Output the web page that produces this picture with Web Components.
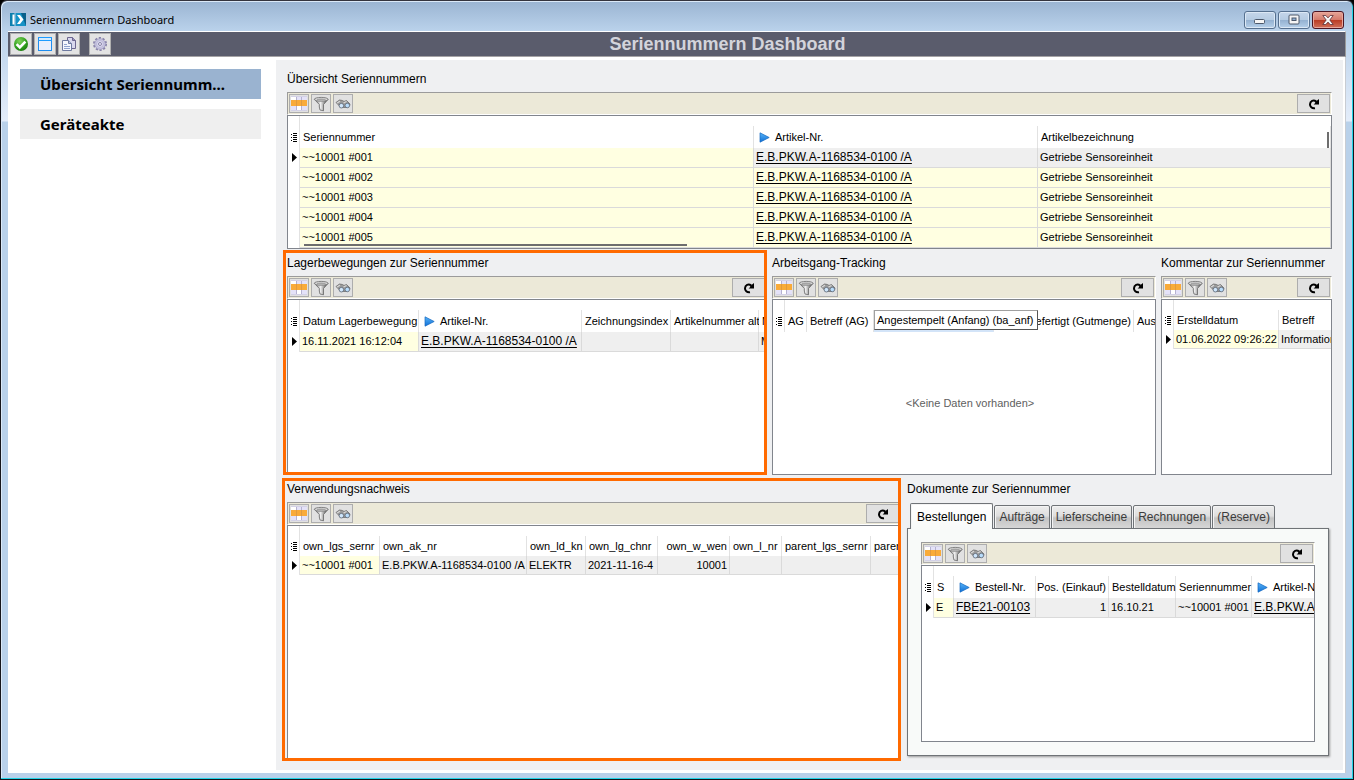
<!DOCTYPE html>
<html lang="de">
<head>
<meta charset="utf-8">
<title>Seriennummern Dashboard</title>
<style>
  html, body { margin: 0; height: 100%; background: #000; }
  body { font: 11px/14px "Liberation Sans", Arial, sans-serif; color: #000; overflow: hidden; }
</style>
</head>
<body>
<app-window>
  <title-bar slot="title">Seriennummern Dashboard</title-bar>
  <main-toolbar slot="toolbar">Seriennummern Dashboard</main-toolbar>
  <side-nav slot="nav"></side-nav>
  <dash-board></dash-board>
</app-window>

<script>
const define = (name, html, setup) => {
  const tpl = document.createElement('template');
  tpl.innerHTML = html;
  customElements.define(name, class extends HTMLElement {
    connectedCallback() {
      if (this.shadowRoot) return;
      const root = this.attachShadow({ mode: 'open' });
      root.append(tpl.content.cloneNode(true));
      if (setup) setup(this, root);
    }
  });
};

/* ---------- icons ---------- */
const ICONS = {
  ok: `<svg width="16" height="16" viewBox="0 0 16 16"><defs><radialGradient id="g" cx=".4" cy=".3" r=".8"><stop offset="0" stop-color="#7fd35a"/><stop offset=".6" stop-color="#2f9e1c"/><stop offset="1" stop-color="#137008"/></radialGradient></defs><circle cx="8" cy="8" r="7" fill="url(#g)"/><path d="M3.600 8.200 6.800 11.400 12.400 5.600" fill="none" stroke="#fff" stroke-width="2.600"/></svg>`,
  window: `<svg width="16" height="16" viewBox="0 0 16 16"><rect x="1.500" y="1.500" width="13" height="13" fill="#e9eefc" stroke="#1e8df0"/><path d="M2 2h12v2.500H2z" fill="#d4ecff"/><path d="M1 4.500h14M1 1.500h14" stroke="#1e9bff"/></svg>`,
  copy: `<svg width="16" height="16" viewBox="0 0 16 16"><path d="M6.500 1.500h5l3 3v8h-8z" fill="#d9d8ee" stroke="#6d6790"/><path d="M11.500 1.500v3h3" fill="#9b95bd" stroke="#6d6790"/><path d="M1.500 4.500h6l3 3v7h-9z" fill="#f4f6fd" stroke="#6f7aa0"/><path d="M7.500 4.500v3h3" fill="#b8c4e2" stroke="#6f7aa0"/><path d="M3 8.500h3M3 10.500h6M3 12.500h6" stroke="#8fa3cf"/></svg>`,
  gear: `<svg width="16" height="16" viewBox="0 0 16 16"><circle cx="8" cy="8" r="6.100" fill="none" stroke="#8883aa" stroke-width="1.800" stroke-dasharray="2.200 1.630"/><circle cx="8" cy="8" r="5.300" fill="#c9c7e2" stroke="#9a95bd" stroke-width=".7"/><circle cx="8" cy="8" r="3.400" fill="#dddcf0" stroke="#b4b0d2" stroke-width=".8"/><circle cx="8" cy="8" r="1.500" fill="#efeff8" stroke="#8883aa"/></svg>`,
  grid: `<svg width="18" height="17" viewBox="0 0 18 17" shape-rendering="crispEdges"><path fill="#fff" d="M1 1h16v15H1z"/><path fill="#e4e2f8" d="M7 1h4v4H7zM12 1h5v4h-5zM1 11h5v5H1zM12 11h5v5h-5z"/><path fill="#f9ab3a" d="M1 5h16v6H1z"/><path d="M6.500 1v15M11.500 1v15" stroke="#b5b2d0"/><path d="M6.500 5v6M11.500 5v6" stroke="#e09a40"/><path d="M1 1.500h16M1 15.500h16" stroke="#d3d1e6"/></svg>`,
  filter: `<svg width="16" height="16" viewBox="0 0 16 16"><defs><linearGradient id="f"><stop offset="0" stop-color="#6a6a6a"/><stop offset=".45" stop-color="#efefef"/><stop offset=".8" stop-color="#7a7a7a"/><stop offset="1" stop-color="#606060"/></linearGradient></defs><path d="M1.500 3.500 6.300 8.500V11L7 14l3.500.8V8.500L15 3.500z" fill="url(#f)" stroke="#666" stroke-width=".8"/><ellipse cx="8.200" cy="3.300" rx="6.900" ry="1.900" fill="#dcdcdc" stroke="#777" stroke-width=".9"/><ellipse cx="8.200" cy="3.500" rx="4.500" ry=".9" fill="#a4a4a4"/></svg>`,
  find: `<svg width="16" height="16" viewBox="0 0 16 16"><path d="M1 6.500 4.500 4l3 .5L9 5.500l2.500-1L15 8l-.5 2-3 1.500L6 11.500z" fill="#9a9a9a" stroke="#6c6c6c" stroke-width=".8"/><path d="M2 7l3-1.800M8.500 7l3-1.500" stroke="#d8d8d8" stroke-width="1.200"/><circle cx="6.400" cy="9.700" r="2.300" fill="#cfe6fb" stroke="#5f6a78" stroke-width=".8"/><circle cx="12.300" cy="9.500" r="2.300" fill="#b8dcfb" stroke="#5f6a78" stroke-width=".8"/></svg>`,
  reload: `<svg width="12" height="12" viewBox="0 0 12 12"><path d="M7 10.200C3.800 10.700 1.900 8.600 2 6.200 2.100 3.200 5.300 1.300 8.300 3.600" fill="none" stroke="#000" stroke-width="2"/><path d="M11 1v5.600H5.600L7.200 5V4z"/></svg>`,
  arrow: `<svg width="11" height="11" viewBox="0 0 11 11"><defs><linearGradient id="a" x2="0" y2="1"><stop offset="0" stop-color="#58b4f8"/><stop offset="1" stop-color="#0f6fd6"/></linearGradient></defs><path d="M1 .8 10.200 5.500 1 10.200z" fill="url(#a)" stroke="#1668c0" stroke-width=".7"/></svg>`,
  list: `<svg width="7" height="9" viewBox="0 0 7 9" shape-rendering="crispEdges"><path d="M2 .5h4M2 2.500h4M2 4.500h4M2 6.500h4M2 8.500h4M0 1.500h1M0 4.500h1M0 7.500h1" stroke="#000" stroke-width="1"/></svg>`,
  current: `<svg width="6" height="9" viewBox="0 0 6 9"><path d="M1 0 6 4.500 1 9z"/></svg>`,
  logo: `<svg width="16" height="13" viewBox="0 0 16 13"><path fill="#0d7fae" d="M0 0h4.500v13H0z"/><path fill="#1592c6" d="M5.500 0H16v13H5.500z"/><path fill="#0a5f8a" d="M11 0h5v13z"/><path fill="#fff" d="M2.500 1.500h2v10h-2zM7 2l3 0 3.500 4.500L10 11H7l3.200-4.500z"/></svg>`,
  min: `<svg width="12" height="12" viewBox="0 0 12 12"><rect x=".5" y="5.500" width="10" height="4" rx="1" fill="#f5f5f5" stroke="#4c586b"/></svg>`,
  max: `<svg width="12" height="12" viewBox="0 0 12 12"><rect x="1" y="1" width="10" height="9" rx="1" fill="#f5f5f5" stroke="#4c586b"/><rect x="4" y="4" width="4" height="2.500" fill="#8fb0d4" stroke="#4c586b"/></svg>`,
  close: `<svg width="12" height="12" viewBox="0 0 12 12"><path d="M.8 1.500h3l2.200 2.400 2.200-2.400h3L7.800 6l3.400 4.500h-3L6 8.100l-2.200 2.400h-3L4.200 6z" fill="#f6f6f6" stroke="#5a3038" stroke-width=".8"/></svg>`
};
customElements.define('ui-icon', class extends HTMLElement {
  connectedCallback() {
    if (this.shadowRoot) return;
    this.attachShadow({ mode: 'open' }).innerHTML =
      `<style>:host{display:inline-flex;flex:none}svg{display:block}</style>${ICONS[this.getAttribute('name')]}`;
  }
});

/* ---------- window frame ---------- */
define('app-window', `
<style>
  :host { display: flex; flex-direction: column; box-sizing: border-box; height: 100vh;
    border: 1px solid #15151b; border-top-color: #34343e; border-radius: 7px 7px 0 0;
    padding: 0 7px 5px 7px; box-shadow: inset -1px -1px 0 #22d3e6, inset 1px 1px 0 #dbe9f8;
    background: linear-gradient(#9ab4d2 0, #bad2eb 30px, #e4edfa 120px, #b9d1ea 121px); }
  .body { flex: 1; display: flex; min-height: 0; background: #fff; padding: 3px 2px 3px 0; border-right: 1px solid #c8ccd2; margin-bottom: 1px; }
  ::slotted(side-nav) { flex: none; }
  ::slotted(dash-board) { flex: 1; min-width: 0; }
</style>
<slot name="title"></slot>
<slot name="toolbar"></slot>
<div class="body"><slot name="nav"></slot><slot></slot></div>`);

define('title-bar', `
<style>
  :host { display: flex; align-items: center; height: 30px; box-sizing: border-box; padding: 7px 2px 0 2px; gap: 4px;
    font: 11px/16px "Noto Sans", sans-serif; }
  span { flex: 1; }
  .ctl { display: flex; gap: 2px; }
  button { width: 32px; height: 18px; padding: 0; display: flex; align-items: center; justify-content: center;
    border: 1px solid #56708f; border-radius: 3px; box-shadow: inset 0 0 0 1px #dce8f5;
    background: linear-gradient(#c5d6ea, #b5cbe2 50%, #93b0d0 50%, #b6d0ea); }
  button.close { border-color: #4c1522; box-shadow: inset 0 0 0 1px #e8a79c;
    background: linear-gradient(#e5a598, #d5796a 50%, #b93a22 50%, #d0705a); }
</style>
<ui-icon name="logo"></ui-icon><span><slot></slot></span>
<div class="ctl">
  <button type="button" aria-label="Minimieren"><ui-icon name="min"></ui-icon></button>
  <button type="button" aria-label="Maximieren"><ui-icon name="max"></ui-icon></button>
  <button type="button" class="close" aria-label="Schließen"><ui-icon name="close"></ui-icon></button>
</div>`);

define('main-toolbar', `
<style>
  :host { display: flex; align-items: center; gap: 2px; height: 26px; box-sizing: border-box; padding: 0 3px 0 2px;
    background: #5a5c6c; border-top: 1px solid #fff; border-bottom: 1px solid #a5a3a5; border-right: 1px solid #9a9a9a; }
  button { width: 22px; height: 22px; padding: 0; display: flex; align-items: center; justify-content: center;
    background: #e3e3e3; border: 1px solid #b0b0b0; }
  button:last-of-type { margin-left: 7px; }
  h1 { flex: 1; margin: 0; text-align: center; font-size: 18px; line-height: 22px; color: #d3d4db; }
</style>
<button type="button" aria-label="OK"><ui-icon name="ok"></ui-icon></button>
<button type="button" aria-label="Fenster"><ui-icon name="window"></ui-icon></button>
<button type="button" aria-label="Kopieren"><ui-icon name="copy"></ui-icon></button>
<button type="button" aria-label="Einstellungen"><ui-icon name="gear"></ui-icon></button>
<h1><slot></slot></h1>`);

define('side-nav', `
<style>
  :host { display: block; width: 241px; padding: 9px 15px 0 12px; }
  nav { display: flex; flex-direction: column; gap: 10px; }
  a { padding: 0 20px; line-height: 30px; background: #efefef; color: #000; text-decoration: none;
    font-family: "Noto Sans", sans-serif; font-weight: bold; font-size: 15px; white-space: nowrap; }
  a[aria-current] { background: #9ab3d0; }
</style>
<nav><a href="#uebersicht" aria-current="page">Übersicht Seriennumm...</a><a href="#geraeteakte">Geräteakte</a></nav>`);

/* ---------- table data ---------- */
/* column: [label, width, options]  options: a = arrow icon, l = link cell, r = right aligned, h = hovered header */
const LINK = 'E.B.PKW.A-1168534-0100 /A';
const GRIDS = {
  serials: {
    stretch: true,
    cols: [['Seriennummer', 454, ''], ['Artikel-Nr.', 284, 'al'], ['Artikelbezeichnung', 0, '']],
    rows: [1, 2, 3, 4, 5].map(n => ['~~10001 #00' + n, LINK, 'Getriebe Sensoreinheit'])
  },
  moves: {
    cols: [['Datum Lagerbewegung', 119, ''], ['Artikel-Nr.', 163, 'al'], ['Zeichnungsindex', 89, ''], ['Artikelnummer alt', 88, ''], ['M', 40, '']],
    rows: [['16.11.2021 16:12:04', LINK, '', '', 'M']]
  },
  tracking: {
    cols: [['AG', 22, ''], ['Betreff (AG)', 67, ''], ['', 120, 'h'], ['Gefertigt (Gutmenge)', 140, 'r'], ['Aus', 40, '']],
    rows: []
  },
  comments: {
    cols: [['Erstelldatum', 105, ''], ['Betreff', 80, '']],
    rows: [['01.06.2022 09:26:22', 'Information']]
  },
  usage: {
    cols: [['own_lgs_sernr', 80, ''], ['own_ak_nr', 147, ''], ['own_ld_kn', 59, ''], ['own_lg_chnr', 72, ''], ['own_w_wen', 72, 'r'], ['own_l_nr', 52, ''], ['parent_lgs_sernr', 89, ''], ['parent_ak_nr', 89, '']],
    rows: [['~~10001 #001', LINK, 'ELEKTR', '2021-11-16-4', '10001', '', '', '']]
  },
  orders: {
    cols: [['S', 20, ''], ['Bestell-Nr.', 82, 'al'], ['Pos. (Einkauf)', 73, 'r'], ['Bestelldatum', 67, ''], ['Seriennummer', 76, ''], ['Artikel-Nr.', 163, 'al']],
    rows: [['E', 'FBE21-00103', '1', '16.10.21', '~~10001 #001', LINK]]
  }
};

define('data-grid', `
<style>
  :host { --head: 32px; --row: 20px; display: flex; flex-direction: column; box-sizing: border-box; overflow: hidden;
    position: relative; border: 1px solid #81858d; background: #fff; }
  :host([compact]) { --head: 30px; --row: 19px; }
  table { table-layout: fixed; width: 1px; border-collapse: separate; border-spacing: 0; flex: none; white-space: nowrap; }
  table.stretch { width: 100%; }
  th, td { padding: 0; overflow: hidden; text-align: left; font-weight: normal; box-sizing: border-box; }
  thead th { height: var(--head); vertical-align: bottom; }
  th div { display: flex; align-items: center; gap: 5px; height: calc(var(--head) - 10px); box-sizing: border-box;
    padding: 0 0 0 3px; border-right: 1px solid #e2e2e2; }
  th .a { padding-left: 5px; }
  th .r { justify-content: flex-end; padding-right: 2px; }
  th .h { border-bottom: 2px solid #d3e4f8; }
  tbody td, tbody th { height: var(--row); }
  td { padding: 0 2px; background: #ffffe1; border-right: 1px solid #dadada; border-bottom: 1px solid #dadada; }
  :host(:not([compact])) td { padding-bottom: 1px; }
  td.r { text-align: right; }
  tr.cur td + td { background: #efefef; }
  .rh { border-right: 1px solid #e2e2e2; background: #fff; }
  .rh div { padding: 0 0 1px 3px; border: 0; height: auto; }
  thead .rh div { height: calc(var(--head) - 11px); }
  a { color: #000; font-size: 12px; text-decoration: underline; text-underline-offset: 2px; }
  .empty { flex: 1; display: flex; align-items: center; justify-content: center; padding-left: 12px; color: #606060; }
  .v, .x { position: absolute; background: #6e6e6e; }
  .v { right: 2px; top: 16px; width: 2px; height: 16px; }
  .x { left: 16px; bottom: 2px; height: 2px; width: 383px; }
</style>
<table><colgroup></colgroup><thead></thead><tbody></tbody></table>`, (host, root) => {
  const g = GRIDS[host.getAttribute('name')];
  const icon = n => `<ui-icon name="${n}"></ui-icon>`;
  if (g.stretch) root.querySelector('table').className = 'stretch';
  root.querySelector('colgroup').innerHTML = '<col style="width:12px">' +
    g.cols.map(c => c[1] ? `<col style="width:${c[1]}px">` : '<col>').join('');
  root.querySelector('thead').innerHTML = `<tr><th class="rh"><div>${icon('list')}</div></th>` +
    g.cols.map(([t, , o]) => `<th scope="col"><div class="${[...o].join(' ')}">${o.includes('a') ? icon('arrow') : ''}<span>${t}</span></div></th>`).join('') + '</tr>';
  root.querySelector('tbody').innerHTML = g.rows.map((r, i) =>
    `<tr class="${i ? '' : 'cur'}"><th class="rh"><div>${i ? '' : icon('current')}</div></th>` +
    r.map((t, k) => { const o = g.cols[k][2];
      return `<td class="${o.includes('r') ? 'r' : ''}">${o.includes('l') ? `<a href="#artikel">${t}</a>` : t}</td>`; }).join('') + '</tr>').join('');
  if (!g.rows.length) root.append(Object.assign(document.createElement('div'), { className: 'empty', textContent: '<Keine Daten vorhanden>' }));
  if (g.stretch) for (const c of ['v', 'x']) root.append(Object.assign(document.createElement('div'), { className: c }));
});

define('grid-toolbar', `
<style>
  :host { display: flex; gap: 2px; height: 23px; box-sizing: border-box; padding: 1px; background: #ece9d8;
    border: 1px solid #9b9b9b; border-right-color: #fff; border-bottom-color: #fff; }
  button { width: 20px; height: 19px; padding: 0; display: flex; align-items: center; justify-content: center;
    background: #e1e1e1; border: 1px solid #adadad; overflow: hidden; }
  .reload { width: 33px; margin-left: auto; }
</style>
<button type="button" aria-label="Spalten"><ui-icon name="grid"></ui-icon></button>
<button type="button" aria-label="Filter"><ui-icon name="filter"></ui-icon></button>
<button type="button" aria-label="Suchen"><ui-icon name="find"></ui-icon></button>
<button type="button" class="reload" aria-label="Aktualisieren"><ui-icon name="reload"></ui-icon></button>`);

define('data-panel', `
<style>
  :host { display: flex; flex-direction: column; min-width: 0; min-height: 0; position: relative; }
  h2 { margin: 0 0 3px; font-size: 12px; font-weight: normal; line-height: 20px; white-space: nowrap; }
  data-grid { flex: 1; min-height: 0; }
  :host([marked])::after { content: ""; position: absolute; inset: var(--mark); border: 3px solid #ff6a00; pointer-events: none; }
</style>
<grid-toolbar></grid-toolbar>
<slot></slot>`, (host, root) => {
  const title = host.getAttribute('heading');
  if (title) root.querySelector('grid-toolbar').before(Object.assign(document.createElement('h2'), { textContent: title }));
  const grid = document.createElement('data-grid');
  grid.setAttribute('name', host.getAttribute('grid'));
  if (host.hasAttribute('compact')) grid.setAttribute('compact', '');
  root.querySelector('slot').before(grid);
});

define('hover-tip', `
<style>
  :host { position: absolute; left: 102px; top: 57px; padding: 2px 3px 2px 2px; line-height: 14px; background: #fff; white-space: nowrap;
    border: 1px solid #a0a0a0; border-right-color: #555; border-bottom-color: #555; box-sizing: border-box; height: 20px; }
</style><slot></slot>`);

define('tab-panel', `
<style>
  :host { display: flex; flex-direction: column; min-width: 0; min-height: 0; margin: 0 3px 5px 0; }
  h2 { margin: 0 0 4px; font-size: 12px; font-weight: normal; line-height: 20px; }
  .tabs { display: flex; align-items: flex-end; gap: 1px; padding-left: 3px; height: 26px; margin-bottom: -1px; z-index: 1; }
  button { font: inherit; font-size: 12px; height: 24px; padding: 0 4px; border: 1px solid #6f7377; border-radius: 2px 2px 0 0;
    color: #3c3c3c; background: linear-gradient(#ededed, #dedede 45%, #c4c4c4 55%, #d6d6d6); box-shadow: inset 1px 1px 0 #f4f4f4; }
  button[aria-selected=true] { height: 26px; padding: 0 6px; color: #000; border-bottom: 0; background: linear-gradient(#fff, #f8faf9); }
  .page { flex: 1; min-height: 0; display: flex; flex-direction: column; padding: 13px; border: 1px solid #6f7377;
    background: #f8faf9; box-shadow: 1px 1px 2px #999; }
  ::slotted(*) { flex: 1; }
</style>
<h2>Dokumente zur Seriennummer</h2>
<div class="tabs" role="tablist">
  <button type="button" role="tab" aria-selected="true">Bestellungen</button>
  <button type="button" role="tab">Aufträge</button>
  <button type="button" role="tab">Lieferscheine</button>
  <button type="button" role="tab">Rechnungen</button>
  <button type="button" role="tab">(Reserve)</button>
</div>
<div class="page"><slot></slot></div>`);

define('dash-board', `
<style>
  :host { display: grid; grid-template-rows: auto minmax(0, 222fr) minmax(0, 281fr); gap: 4px; background: #eff0f2; padding: 9px 11px; }
  .row { display: grid; min-width: 0; }
  .two { grid-template-columns: minmax(0, 480fr) minmax(0, 384fr) minmax(0, 171fr); gap: 5px; }
  .three { grid-template-columns: minmax(0, 614fr) minmax(0, 425fr); gap: 6px; }
</style>
<data-panel heading="Übersicht Seriennummern" grid="serials"></data-panel>
<div class="row two">
  <data-panel marked style="--mark: -3px 0 0 -4px" heading="Lagerbewegungen zur Seriennummer" grid="moves"></data-panel>
  <data-panel heading="Arbeitsgang-Tracking" grid="tracking"><hover-tip role="tooltip">Angestempelt (Anfang) (ba_anf)</hover-tip></data-panel>
  <data-panel heading="Kommentar zur Seriennummer" grid="comments" compact></data-panel>
</div>
<div class="row three">
  <data-panel marked style="--mark: -1px 0 0 -5px" heading="Verwendungsnachweis" grid="usage" compact></data-panel>
  <tab-panel><data-panel grid="orders"></data-panel></tab-panel>
</div>`);
</script>
</body>
</html>
